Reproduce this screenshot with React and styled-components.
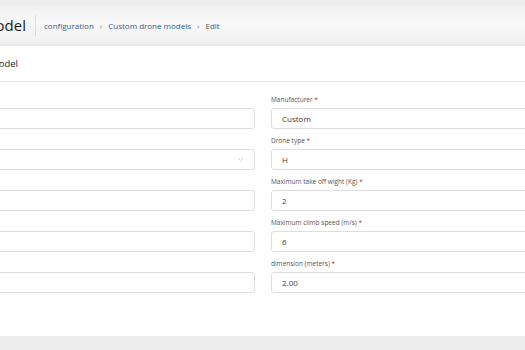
import React from 'react'
import styled, { createGlobalStyle } from 'styled-components'

const GlobalStyle = createGlobalStyle`
    html, body {
        margin: 0;
        padding: 0;
        background: #ededed;
        font-family: "Open Sans", "Noto Sans", sans-serif;
        overflow: hidden;
    }
`

/* Page is wider than the window; the left side is scrolled off */

const Page = styled.div`
    width: 800px;
    margin-left: -137px;
    padding-top: 4px;
`

const Header = styled.header`
    height: 42px;
    display: flex;
    align-items: center;
    background: linear-gradient(#efefef, #f7f7f7 40%, #f4f4f4 80%, #ececec);
    box-shadow: 0 1px 2px rgba(0, 0, 0, 0.06);
`

const TitleBox = styled.div`
    width: ${({ $w }) => `${$w}px`};
    flex: none;
    display: flex;
    justify-content: flex-end;
    white-space: nowrap;
`

const PageTitle = styled.h1`
    margin: 0;
    font-size: 15px;
    font-weight: 400;
    color: #1d1d1d;
`

const Divider = styled.span`
    width: 1px;
    height: 21px;
    background: #dcdcdc;
    margin: 0 8px 0 9px;
`

const Crumbs = styled.nav`
    display: flex;
    align-items: center;
    gap: 6px;
    font-size: 8px;
`

const Crumb = styled.span`
    color: ${({ $current }) => ($current ? '#5a5a5a' : '#2f668e')};
`

const Sep = styled.span`
    color: #777;
    font-size: 8px;
`

const Card = styled.section`
    background: #fff;
    height: 290px;
    box-shadow: 0 1px 3px rgba(0, 0, 0, 0.08);
`

const CardHead = styled.div`
    height: 35px;
    display: flex;
    align-items: center;
    border-bottom: 1px solid #e8e8e8;
`

const CardTitle = styled.h2`
    margin: 0;
    font-size: 9.5px;
    font-weight: 400;
    color: #222;
`

const Form = styled.div`
    display: grid;
    grid-template-columns: 1fr 1fr;
    column-gap: 16px;
    row-gap: 8px;
    padding: 14px 16px 0;
`

const Field = styled.div`
    display: flex;
    flex-direction: column;
`

const Label = styled.label`
    height: 8px;
    line-height: 8px;
    font-size: 6.5px;
    color: #555;
    margin-bottom: 4px;
    white-space: nowrap;
`

const Req = styled.span`
    color: #c0392b;
`

const InputBox = styled.div`
    height: 21px;
    box-sizing: border-box;
    border: 1px solid #dedede;
    border-radius: 3px;
    display: flex;
    align-items: center;
    justify-content: space-between;
    padding: 0 10px;
    font-size: 8px;
    color: #3c3c3c;
`

const Chevron = () => (
    <svg width="7" height="5" viewBox="0 0 7 5">
        <path d="M1 1l2.5 2.5L6 1" fill="none" stroke="#c4c4c4" strokeWidth="0.8" />
    </svg>
)

const fields = [
    ['Name', ''],
    ['Manufacturer', 'Custom'],
    ['Category', '', true],
    ['Drone type', 'H'],
    ['Weight (Kg)', ''],
    ['Maximum take off wight (Kg)', '2'],
    ['Maximum speed (m/s)', ''],
    ['Maximum climb speed (m/s)', '6'],
    ['Endurance (min)', ''],
    ['dimension (meters)', '2.00'],
]

export default function App() {
    return (
        <>
            <GlobalStyle />
            <Page>
                <Header>
                    <TitleBox $w={163}>
                        <PageTitle>Edit Custom drone model</PageTitle>
                    </TitleBox>
                    <Divider />
                    <Crumbs>
                        <Crumb>configuration</Crumb>
                        <Sep>›</Sep>
                        <Crumb>Custom drone models</Crumb>
                        <Sep>›</Sep>
                        <Crumb $current>Edit</Crumb>
                    </Crumbs>
                </Header>
                <Card>
                    <CardHead>
                        <TitleBox $w={155}>
                            <CardTitle>Custom drone model</CardTitle>
                        </TitleBox>
                    </CardHead>
                    <Form>
                        {fields.map(([label, value, select]) => (
                            <Field key={label}>
                                <Label>
                                    {label} <Req>*</Req>
                                </Label>
                                <InputBox>
                                    <span>{value}</span>
                                    {select && <Chevron />}
                                </InputBox>
                            </Field>
                        ))}
                    </Form>
                </Card>
            </Page>
        </>
    )
}
